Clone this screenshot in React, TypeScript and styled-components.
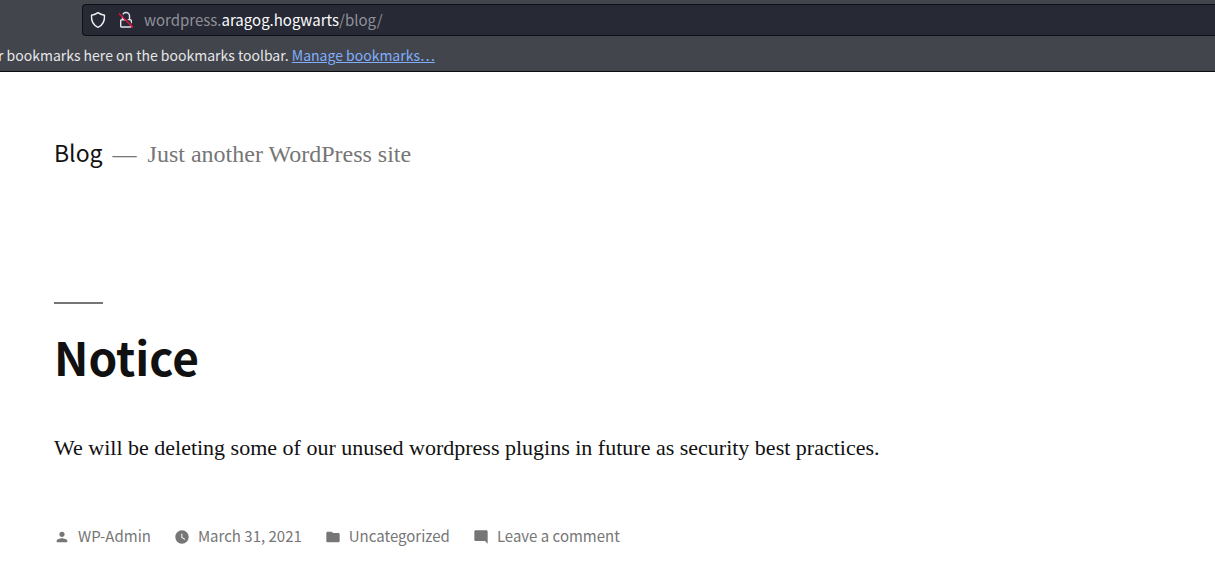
import React from "react";
import styled, { createGlobalStyle } from "styled-components";

const sans = `"Noto Sans CJK SC", "Noto Sans", sans-serif`;
const serif = `"Liberation Serif", "Times New Roman", serif`;

const GlobalStyle = createGlobalStyle`
  * { box-sizing: border-box; }
  body { margin: 0; background: #fff; color: #111; font-family: ${serif}; overflow-x: hidden; }
`;

const Chrome = styled.header`
  background: #42454c;
  border-bottom: 1px solid #0c0c0f;
  font-family: ${sans};
  overflow: hidden;
`;

const AddressBar = styled.div`
  display: flex;
  align-items: center;
  height: 32px;
  margin: 4px 0 0 82px;
  padding-left: 7px;
  background: #272935;
  border: 1px solid #0f1014;
  border-right: 0;
  border-radius: 4px 0 0 4px;
`;

const BarButton = styled.button`
  display: flex;
  width: 28px;
  padding: 0;
  border: 0;
  background: none;
`;

const Url = styled.div`
  margin-left: -2px;
  font-size: 15px;
  line-height: 22px;
  color: #8f9097;
  white-space: nowrap;

  strong { font-weight: 400; color: #fbfbfe; }
`;

const BookmarksBar = styled.div`
  height: 35px;
  margin-left: -2px;
  padding-top: 9px;
  font-size: 14px;
  line-height: 20px;
  color: #e6e6e8;
  white-space: nowrap;

  a { color: #80aefc; text-decoration: underline; }
`;

const Page = styled.div`
  padding: 62px 54px 0;
`;

const SiteHeader = styled.div`
  display: flex;
  align-items: baseline;
  font-size: 24px;
  line-height: 36px;
  white-space: nowrap;
`;

const SiteTitle = styled.p`
  margin: 0;
  font-family: ${sans};
  font-size: 23px;

  a { color: #111; text-decoration: none; }
`;

const Tagline = styled.p`
  margin: 0;
  color: #767676;

  &::before { content: "—"; margin: 0 11px 0 10px; }
`;

const Entry = styled.article`
  margin-top: 130px;
`;

const EntryTitle = styled.h1`
  margin: 0;
  font-family: ${sans};
  font-size: 46px;
  line-height: 60px;
  font-weight: 700;

  &::before {
    content: "";
    display: block;
    width: 49px;
    height: 2px;
    margin-bottom: 22px;
    background: #767676;
  }
`;

const EntryText = styled.p`
  margin: 42px 0 0;
  font-size: 22px;
  line-height: 40px;
`;

const EntryMeta = styled.footer`
  display: flex;
  gap: 23px;
  margin-top: 56px;
  font-family: ${sans};
  font-size: 15px;
  line-height: 24px;
  white-space: nowrap;
`;

const MetaLink = styled.a`
  display: flex;
  align-items: center;
  gap: 8px;
  color: #767676;
  text-decoration: none;

  svg { margin-top: 2px; }
`;

const MetaIcon = ({ d }: { d: string }) => (
  <svg width="16" height="16" viewBox="0 0 24 24" fill="currentColor" aria-hidden="true">
    <path d={d} />
  </svg>
);

const meta = [
  { label: "WP-Admin", d: "M12 12c2.21 0 4-1.79 4-4s-1.79-4-4-4-4 1.79-4 4 1.79 4 4 4zm0 2c-2.67 0-8 1.34-8 4v2h16v-2c0-2.66-5.33-4-8-4z" },
  { label: "March 31, 2021", d: "M12 2C6.5 2 2 6.5 2 12s4.5 10 10 10 10-4.5 10-10S17.5 2 12 2zm4.2 14.2L11 13V7h1.5v5.2l4.500 2.7-.8 1.3z" },
  { label: "Uncategorized", d: "M10 4H4c-1.1 0-1.99.9-1.99 2L2 18c0 1.1.9 2 2 2h16c1.1 0 2-.9 2-2V8c0-1.1-.9-2-2-2h-8l-2-2z" },
  { label: "Leave a comment", d: "M21.99 4c0-1.1-.89-2-1.99-2H4c-1.1 0-2 .9-2 2v12c0 1.1.9 2 2 2h14l4 4-.01-18z" },
];

export default function App() {
  return (
    <>
      <GlobalStyle />
      <Chrome>
        <AddressBar>
          <BarButton aria-label="Tracking protection">
            <svg width="16" height="18" viewBox="0 0 16 18" fill="none" stroke="#f0f0f3" strokeWidth="1.4" strokeLinejoin="round">
              <path d="M8 1.6C6.5 2.8 4 3.9 1.500 4.300C1.200 9.300 3 14.200 8 16.400C13 14.200 14.800 9.300 14.500 4.300C12 3.900 9.500 2.800 8 1.600Z" />
            </svg>
          </BarButton>
          <BarButton aria-label="Connection not secure">
            <svg width="16" height="18" viewBox="0 0 16 18" fill="none">
              <path d="M4.5 8.500V5a3.500 3.500 0 0 1 7 0V8.500" stroke="#e4e4e8" strokeWidth="1.4" />
              <rect x="2.700" y="8.700" width="10.600" height="7.300" rx="1" stroke="#e4e4e8" strokeWidth="1.4" />
              <path d="M1.800 1.600L15.800 15.600" stroke="#272935" strokeWidth="1.400" />
              <path d="M1 2.500L15 16.500" stroke="#e2123f" strokeWidth="1.500" />
            </svg>
          </BarButton>
          <Url>wordpress.<strong>aragog.hogwarts</strong>/blog/</Url>
        </AddressBar>
        <BookmarksBar>
          r bookmarks here on the bookmarks toolbar. <a href="#bookmarks">Manage bookmarks…</a>
        </BookmarksBar>
      </Chrome>
      <Page>
        <SiteHeader>
          <SiteTitle><a href="#home">Blog</a></SiteTitle>
          <Tagline>Just another WordPress site</Tagline>
        </SiteHeader>
        <Entry>
          <EntryTitle>Notice</EntryTitle>
          <EntryText>We will be deleting some of our unused wordpress plugins in future as security best practices.</EntryText>
          <EntryMeta>
            {meta.map((m) => (
              <MetaLink key={m.label} href="#post">
                <MetaIcon d={m.d} />
                {m.label}
              </MetaLink>
            ))}
          </EntryMeta>
        </Entry>
      </Page>
    </>
  );
}
